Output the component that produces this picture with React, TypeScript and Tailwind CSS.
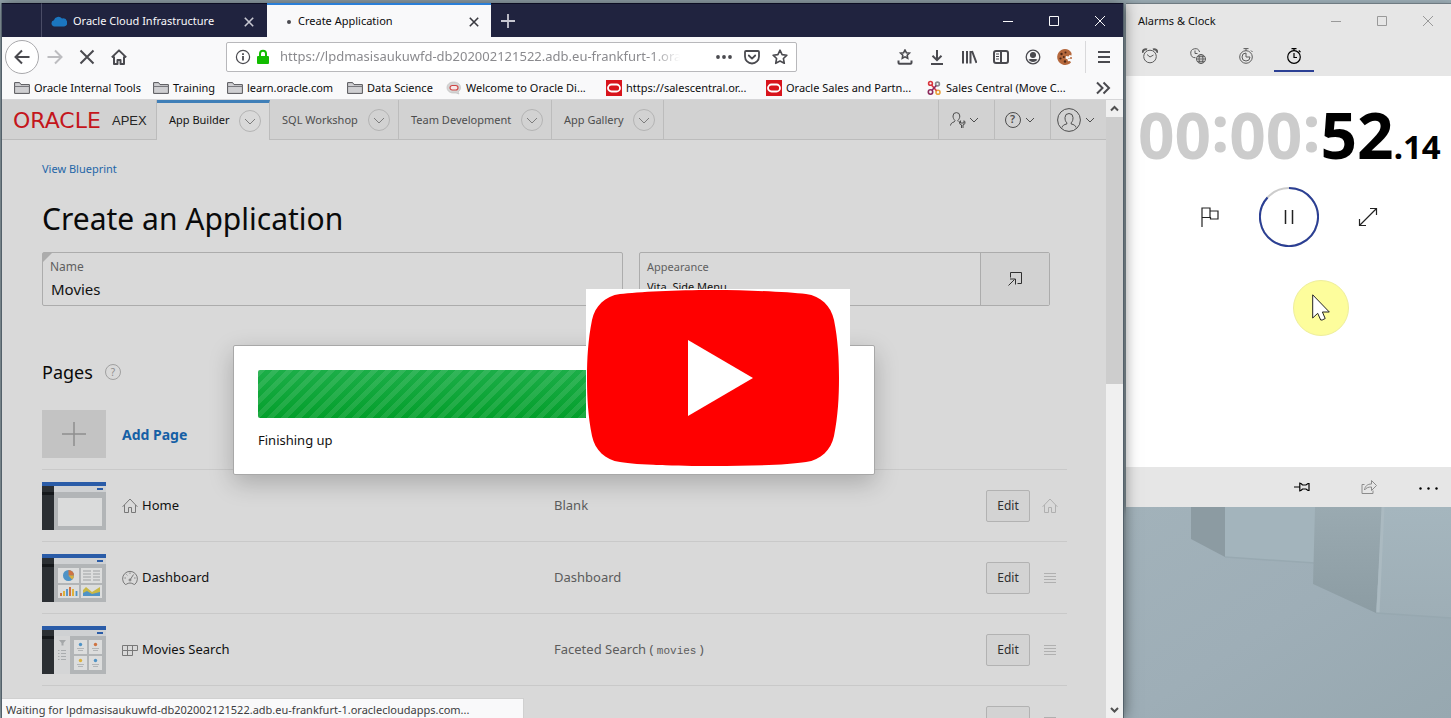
import React, { useState } from "react";

type IconProps = {
  size?: number;
  className?: string;
  sw?: number;
  children: React.ReactNode;
};

function Icon({ size = 16, className = "", sw = 1, children }: IconProps) {
  return (
    <svg
      aria-hidden="true"
      width={size}
      height={size}
      viewBox={`0 0 ${size} ${size}`}
      fill="none"
      stroke="currentColor"
      strokeWidth={sw}
      className={"shrink-0 " + className}
    >
      {children}
    </svg>
  );
}

function Chevron() {
  return (
    <Icon size={10}>
      <path d="M1 3l4 4 4-4" />
    </Icon>
  );
}

function Cross({ className = "" }: { className?: string }) {
  return (
    <Icon size={10} sw={1.6} className={className}>
      <path d="M.8.8l8.4 8.4M9.2.8L.8 9.2" />
    </Icon>
  );
}

/* ---------- Browser chrome ---------- */

function TabStrip() {
  return (
    <div className="flex h-[34px] shrink-0 bg-[#20233f] text-[11px] text-[#f9f9fa]">
      <div className="w-[39px] border-t border-[#0c0d22]" />
      <div className="flex w-[226px] items-center border-t border-l border-t-[#0c0d22] border-l-[#4a4c66] pt-0.5 pr-[13px] pl-[9px]">
        <svg aria-hidden="true" width="16" height="11" viewBox="0 0 16 11" className="mr-1.5 shrink-0 fill-[#1b76c0]">
          <path d="M3.500 10.500a3.200 3.200 0 0 1-.6-6.300A4.600 4.600 0 0 1 11 2.600 4 4 0 0 1 13.200 10.500z" />
        </svg>
        <span className="flex-1 whitespace-nowrap">Oracle Cloud Infrastructure</span>
        <button aria-label="Close Oracle Cloud Infrastructure tab" className="text-[#c8c8d2]">
          <Cross />
        </button>
      </div>
      <div className="flex w-[224px] items-center border-t-2 border-[#2a7fd8] bg-[#f9f9fa] pt-px pr-3 pl-5 text-[#0c0c0d]">
        <span className="mr-[7px] h-1 w-1 rounded-full bg-[#4a4a4f]" />
        <span className="flex-1 whitespace-nowrap">Create Application</span>
        <button aria-label="Close Create Application tab" className="text-[#3a3a40]">
          <Cross />
        </button>
      </div>
      <div className="flex flex-1 border-t border-[#0c0d22]">
        <button aria-label="New tab" className="flex w-[34px] items-center justify-center text-[#c8c8d2]">
          <Icon size={14} sw={1.8}>
            <path d="M7 0v14M0 7h14" />
          </Icon>
        </button>
        <div className="ml-auto flex">
          <button aria-label="Minimize" className="flex w-[46px] items-center justify-center">
            <Icon size={10}>
              <path d="M0 5.500h10" />
            </Icon>
          </button>
          <button aria-label="Maximize" className="flex w-[46px] items-center justify-center">
            <Icon size={10}>
              <path d="M.5.5h9v9h-9z" />
            </Icon>
          </button>
          <button aria-label="Close window" className="flex w-[46px] items-center justify-center">
            <Icon size={10}>
              <path d="M0 0l10 10M10 0L0 10" />
            </Icon>
          </button>
        </div>
      </div>
    </div>
  );
}

function ToolButton({ label, children, className = "" }: { label: string; children: React.ReactNode; className?: string }) {
  return (
    <button aria-label={label} className={"flex h-8 w-8 shrink-0 items-center justify-center " + className}>
      {children}
    </button>
  );
}

function Toolbar() {
  const [url, setUrl] = useState("https://lpdmasisaukuwfd-db202002121522.adb.eu-frankfurt-1.oraclecloudapps.com");
  return (
    <div className="flex h-10 shrink-0 items-center bg-[#f9f9fa] pl-[3px] text-[#4a4a4f]">
      <button
        aria-label="Back"
        className="flex h-[34px] w-[34px] shrink-0 items-center justify-center rounded-full border border-[#a9a9ac] bg-white"
      >
        <Icon sw={2}>
          <path d="M15.500 8H1.500M8 1.500L1.500 8 8 14.500" />
        </Icon>
      </button>
      <ToolButton label="Forward" className="text-[#bdbdc0]">
        <Icon sw={2}>
          <path d="M.5 8h14M8 1.500L14.500 8 8 14.500" />
        </Icon>
      </ToolButton>
      <ToolButton label="Stop">
        <Icon sw={2}>
          <path d="M1.500 1.500l13 13M14.500 1.500l-13 13" />
        </Icon>
      </ToolButton>
      <ToolButton label="Home">
        <Icon sw={2}>
          <path d="M.8 8.400L8 1.400l7.200 7M3 7.500V15h3.500v-4h3v4H13V7.500" strokeLinejoin="round" />
        </Icon>
      </ToolButton>
      <div className="grid flex-1 grid-cols-[91fr_571fr_92fr]">
        <div className="col-start-2 flex h-[30px] items-center rounded-xs border border-[#b8b8bb] bg-white px-2">
          <Icon sw={1.2}>
            <circle cx="8" cy="8" r="6.6" />
            <path d="M8 7v4.500M8 4.200v1.800" strokeWidth="1.8" />
          </Icon>
          <svg aria-hidden="true" width="14" height="16" viewBox="0 0 14 16" className="ml-[5px] shrink-0">
            <path d="M4 8V4.800a3 3 0 0 1 6 0V8" fill="none" stroke="#12bc00" strokeWidth="2" />
            <rect x="1" y="7" width="12" height="8" rx="1" fill="#12bc00" />
          </svg>
          <input
            aria-label="Address"
            value={url}
            onChange={(e) => setUrl(e.target.value)}
            className="ml-2.5 min-w-0 flex-1 bg-transparent text-[13px] text-[#8a8a8e] outline-none [mask-image:linear-gradient(to_right,#000_93%,transparent)]"
          />
          <button aria-label="Page actions" className="ml-9 flex w-4 justify-center">
            <Icon>
              <g fill="currentColor" stroke="none">
                <circle cx="2" cy="8" r="1.900" />
                <circle cx="8" cy="8" r="1.900" />
                <circle cx="14" cy="8" r="1.900" />
              </g>
            </Icon>
          </button>
          <button aria-label="Save to Pocket" className="ml-3">
            <Icon sw={1.8}>
              <path d="M2 2h12a1 1 0 0 1 1 1v4.500a7 7 0 0 1-14 0V3a1 1 0 0 1 1-1z" />
              <path d="M4.800 6.500L8 9.600l3.200-3.100" strokeLinecap="round" strokeLinejoin="round" />
            </Icon>
          </button>
          <button aria-label="Bookmark this page" className="-mr-2 ml-3 flex w-6">
            <Icon sw={1.6}>
              <path d="M8 1.200l2.100 4.400 4.800.6-3.500 3.300.9 4.800L8 12l-4.300 2.300.9-4.800L1.100 6.200l4.800-.6z" strokeLinejoin="round" />
            </Icon>
          </button>
        </div>
      </div>
      <ToolButton label="Show bookmarks">
        <Icon sw={1.6}>
          <path d="M8 1l1.400 2.700 3 .4-2.200 2.100.5 3L8 7.800 5.300 9.200l.5-3L3.600 4.100l3-.4z" />
          <path d="M1.500 11.500v2.200a1 1 0 0 0 1 1h11a1 1 0 0 0 1-1v-2.200" strokeWidth="2" />
        </Icon>
      </ToolButton>
      <ToolButton label="Downloads">
        <Icon sw={2}>
          <path d="M8 1v10M3.500 6.800L8 11.200l4.500-4.400M2 15h12" />
        </Icon>
      </ToolButton>
      <ToolButton label="Library">
        <Icon sw={2}>
          <path d="M2 2v12.500M6 2v12.500M9.500 2v12.500M11 2l4.500 12" />
        </Icon>
      </ToolButton>
      <ToolButton label="Sidebars">
        <Icon sw={2}>
          <rect x="1" y="2" width="14" height="12" rx="2" />
          <path d="M8 2v12" />
          <path d="M3 5h3M3 7.500h3M3 10h3" strokeWidth="1" />
        </Icon>
      </ToolButton>
      <ToolButton label="Account">
        <Icon sw={1.3}>
          <circle cx="8" cy="8" r="6.800" />
          <circle cx="8" cy="6" r="2.400" fill="currentColor" />
          <path d="M3.500 10.500c1.500-1 2-.5 2.500-.5h4c.5 0 1-.5 2.500.5C11.500 12 10 13 8 13s-3.500-1-4.500-2.500z" fill="currentColor" stroke="none" />
        </Icon>
      </ToolButton>
      <ToolButton label="Cookie manager">
        <svg aria-hidden="true" width="16" height="16" viewBox="0 0 16 16">
          <path d="M8 0a8 8 0 1 0 6 13.500l-1-1.500-2 .2-.5-2-2-.7.5-2.500 2.500.5 1-1.500 2 .5V4A8 8 0 0 0 8 0z" fill="#b5683c" />
          <g fill="#4d2716">
            <circle cx="4.500" cy="5" r="1.200" />
            <circle cx="8.500" cy="3.500" r="1" />
            <circle cx="3.500" cy="9.500" r="1.100" />
            <circle cx="6.800" cy="8" r="1" />
            <circle cx="8" cy="12.500" r="1.200" />
          </g>
          <circle cx="14" cy="9" r="1" fill="#b5683c" />
          <circle cx="12" cy="9.500" r=".6" fill="#b5683c" />
        </svg>
      </ToolButton>
      <div className="ml-1 flex h-8 w-[38px] shrink-0 items-center border-l border-[#d9d9db] pl-2.5">
        <button aria-label="Open menu">
          <Icon sw={2}>
            <path d="M2 3h12M2 8h12M2 13h12" />
          </Icon>
        </button>
      </div>
    </div>
  );
}

function Folder() {
  return (
    <Icon>
      <path d="M.6 13.400V2.600h5l1.400 2h8.400v8.800z" fill="#cfcfd2" stroke="#55555a" />
      <path d="M.6 6.500h14.800" stroke="#77777c" />
    </Icon>
  );
}

function OracleBadge() {
  return (
    <svg aria-hidden="true" width="16" height="16" viewBox="0 0 16 16" className="shrink-0">
      <rect width="16" height="16" fill="#d8141c" />
      <rect x="2" y="4.500" width="12" height="7" rx="3.500" fill="none" stroke="#fff" strokeWidth="1.800" />
    </svg>
  );
}

function ChatBadge() {
  return (
    <svg aria-hidden="true" width="16" height="16" viewBox="0 0 16 16" className="shrink-0">
      <path d="M7.500 2C3.500 2 1 4.500 1 7.500S3.500 13 7 13l3 0 3 1-1-2c1.500-1 2.500-2.500 2.500-4.500C14.500 4.500 12 2 7.500 2z" fill="#d5d5d5" stroke="#bbb" strokeWidth=".6" />
      <rect x="4" y="5.500" width="8" height="4.500" rx="2.200" fill="#f6e8e8" stroke="#cf4545" strokeWidth="1.200" />
    </svg>
  );
}

function KnotBadge() {
  return (
    <svg aria-hidden="true" width="16" height="16" viewBox="0 0 16 16" fill="none" strokeWidth="1.600" className="shrink-0">
      <circle cx="4.500" cy="3.400" r="1.900" stroke="#d9363e" />
      <circle cx="11.500" cy="4" r="1.900" stroke="#8a8a8e" />
      <circle cx="4.500" cy="12" r="2.200" stroke="#8c2a5c" />
      <circle cx="12" cy="12.300" r="2" stroke="#e9a13b" />
      <path d="M5.500 5l5 5.800" stroke="#d9363e" />
      <path d="M10.300 5.500L6 10.300" stroke="#8c2a5c" />
    </svg>
  );
}

const bookmarks = [
  { text: "Oracle Internal Tools", icon: <Folder />, width: "w-[139px]" },
  { text: "Training", icon: <Folder />, width: "w-[74px]" },
  { text: "learn.oracle.com", icon: <Folder />, width: "w-[120px]" },
  { text: "Data Science", icon: <Folder />, width: "w-[99px]" },
  { text: "Welcome to Oracle Di...", icon: <ChatBadge />, width: "w-[160px]" },
  { text: "https://salescentral.or...", icon: <OracleBadge />, width: "w-[160px]" },
  { text: "Oracle Sales and Partn...", icon: <OracleBadge />, width: "w-[160px]" },
  { text: "Sales Central (Move C...", icon: <KnotBadge />, width: "w-[160px]" },
];

function BookmarkBar() {
  return (
    <nav aria-label="Bookmarks" className="flex h-[23px] shrink-0 items-center overflow-hidden border-b border-[#d6d6d8] bg-[#f9f9fa] px-3 text-[11px] text-[#0c0c0d]">
      {bookmarks.map((b) => (
        <a key={b.text} href="#" className={"flex shrink-0 items-center gap-1 whitespace-nowrap " + b.width}>
          {b.icon}
          {b.text}
        </a>
      ))}
      <button aria-label="More bookmarks" className="ml-auto text-[#4a4a4f]">
        <Icon sw={2}>
          <path d="M2 2.500L7.500 8 2 13.500M8.500 2.500L14 8l-5.500 5.500" />
        </Icon>
      </button>
    </nav>
  );
}

/* ---------- APEX page ---------- */

const menus = [
  { text: "App Builder", width: "w-[113px]", active: true },
  { text: "SQL Workshop", width: "w-[129px]", active: false },
  { text: "Team Development", width: "w-[153px]", active: false },
  { text: "App Gallery", width: "w-[112px]", active: false },
];

function ApexHeader() {
  return (
    <header className="flex h-10 shrink-0 text-[11px] text-[#4d4d4d]">
      <a href="#" className="flex w-[155px] shrink-0 items-center border-r border-b border-[#bcbcbc] bg-[#d2d2d2] pt-0.5 pl-[11px]">
        <span className="w-[99px] font-['DejaVu_Sans'] text-[22px] leading-none text-[#c4161c]">ORACLE</span>
        <span className="font-['Liberation_Sans'] text-[13px] text-[#262626]">APEX</span>
      </a>
      {menus.map((m) => (
        <div
          key={m.text}
          className={
            "flex shrink-0 items-center justify-between border-r border-[#bcbcbc] pr-2 pl-3 " +
            m.width +
            (m.active ? " border-t-3 border-t-[#3f7fb8] bg-[#d9d9d9] pb-0.5 text-[#111111]" : " border-b bg-[#d2d2d2] pt-px")
          }
        >
          <a href="#" className="whitespace-nowrap">{m.text}</a>
          <button
            aria-label={m.text + " menu"}
            className="flex h-[22px] w-[22px] items-center justify-center rounded-full border border-[#b4b4b4] text-[#7d7d7d]"
          >
            <Icon size={14}>
              <path d="M2 5l5 5 5-5" />
            </Icon>
          </button>
        </div>
      ))}
      <div className="flex flex-1 justify-end border-b border-[#bcbcbc] bg-[#d2d2d2]">
        <button aria-label="Administration" className="flex w-14 items-center justify-center gap-0.5 border-l border-[#bcbcbc] pr-1.5">
          <Icon size={18}>
            <path d="M1.500 14.500c.3-2 1.500-3 3.700-3.600l.8-1.300C4.800 8.300 4 6.800 4 5a3.300 3.300 0 0 1 6.800 0c0 1.800-.8 3.300-2 4.600l.5 1" />
            <path d="M11.500 9.700a2.300 2.300 0 0 0 1 4.200V17M15 9.700a2.300 2.300 0 0 1-1 4.200V17M11.500 9.700V12H15V9.700" />
          </Icon>
          <Chevron />
        </button>
        <button aria-label="Help" className="flex w-14 items-center justify-center gap-1 border-l border-[#bcbcbc] pr-1.5">
          <span className="flex h-4 w-4 items-center justify-center rounded-full border border-current text-[11px] font-semibold">?</span>
          <Chevron />
        </button>
        <button aria-label="User account" className="flex w-14 items-center justify-center gap-1 border-l border-[#bcbcbc] pr-1.5">
          <Icon size={24}>
            <circle cx="12" cy="12" r="11.400" />
            <path d="M5 19.500c.5-2 2-3 4.800-3.500v-1.200C8.500 13.500 8 12 8 9.500a4 4 0 0 1 8 0c0 2.500-.5 4-1.800 5.300V16c2.800.5 4.300 1.500 4.800 3.500" />
          </Icon>
          <Chevron />
        </button>
      </div>
    </header>
  );
}

function ThumbFrame({ children }: { children: React.ReactNode }) {
  return (
    <svg aria-hidden="true" width="64" height="48" viewBox="0 0 64 48" className="block">
      <rect width="64" height="48" fill="#c7c9ca" />
      <rect x="12" y="10" width="52" height="38" fill="#b2b5b7" />
      <rect y="4" width="12" height="44" fill="#2b2f33" />
      <rect y="10" width="12" height="3" fill="#15181b" />
      <rect x="12" y="4" width="52" height="6" fill="#cfd1d3" />
      <rect width="64" height="4" fill="#2a5ca8" />
      <rect x="55" y="6" width="6" height="2" fill="#2a5ca8" />
      {children}
    </svg>
  );
}

function BlankThumb() {
  return (
    <ThumbFrame>
      <rect x="16" y="16" width="44" height="28" fill="#dadbdb" />
    </ThumbFrame>
  );
}

function DashboardThumb() {
  return (
    <ThumbFrame>
      <g fill="#dcdddd">
        <rect x="16" y="14" width="21" height="15" />
        <rect x="39" y="14" width="21" height="15" />
        <rect x="16" y="31" width="21" height="13" />
        <rect x="39" y="31" width="21" height="13" />
      </g>
      <circle cx="26.500" cy="21.500" r="5.500" fill="#4f93c6" />
      <path d="M26.500 21.500V16a5.500 5.500 0 0 1 5.500 5.500z" fill="#cf7442" />
      <path d="M26.500 21.500H32a5.500 5.500 0 0 1-2 4z" fill="#dcb13c" />
      <path d="M41 17h8M51 17h7M41 20h8M51 20h7M41 23h8M51 23h7M41 26h8M51 26h7" stroke="#b2b5b7" strokeWidth="1.500" />
      <path d="M19 42v-3M28 42v-9M31 42v-5" stroke="#cf7442" strokeWidth="2" />
      <path d="M22 42v-5M31 42v-7" stroke="#dcb13c" strokeWidth="2" />
      <path d="M25 42v-7M34.500 42v-5" stroke="#4f93c6" strokeWidth="1.800" />
      <path d="M41 42v-6l3-3 6 5 8-5v9z" fill="#c9b845" />
      <path d="M41 42v-3l4-2 5 3 8-2v4z" fill="#4f93c6" />
    </ThumbFrame>
  );
}

function SearchThumb() {
  return (
    <ThumbFrame>
      <rect x="12" y="10" width="16" height="38" fill="#d4d5d6" />
      <path d="M17 14h7l-2.500 3v2.500h-2V17z" fill="#a4a7a9" />
      <path d="M16 24.500h1.500M19 24.500h5M16 27.500h1.500M19 27.500h5M16 30.500h1.500M19 30.500h5M16 33.500h1.500M19 33.500h5" stroke="#a9acae" />
      <g fill="#dcdddd">
        <rect x="32" y="14" width="13" height="14" />
        <rect x="47" y="14" width="13" height="14" />
        <rect x="32" y="30" width="13" height="14" />
        <rect x="47" y="30" width="13" height="14" />
      </g>
      <circle cx="38.500" cy="18.500" r="1.700" fill="#4f93c6" />
      <circle cx="53.500" cy="18.500" r="1.700" fill="#cf7442" />
      <circle cx="38.500" cy="34.500" r="1.700" fill="#dcb13c" />
      <circle cx="53.500" cy="34.500" r="1.700" fill="#4f93c6" />
      <path d="M35 22.500h7M36 24.500h5M50 22.500h7M51 24.500h5M35 38.500h7M36 40.500h5M50 38.500h7M51 40.500h5" stroke="#b2b5b7" />
    </ThumbFrame>
  );
}

function HomeGlyph() {
  return (
    <Icon>
      <path d="M.6 8.800L8 1l7.400 7.800M2.500 7v7.500h4v-5h3v5h4V7" />
    </Icon>
  );
}

function GaugeGlyph() {
  return (
    <Icon>
      <path d="M3.200 14.400a7.400 7.400 0 1 1 9.600 0c-.8.700-2-1.400-4.800-1.400s-4 2.100-4.800 1.400z" />
      <path d="M8 10l3.500-5.500M2.500 8h1.300M4.500 4.500l.8.800M8 2.500v1.300M12.200 8h1.300" />
      <circle cx="8" cy="10" r="1" />
    </Icon>
  );
}

function GridGlyph() {
  return (
    <Icon>
      <path d="M.5 3.500h15v5H.5zM.5 8.500v5h10v-10M5.500 3.500v10" />
    </Icon>
  );
}

function DragHandle() {
  return (
    <Icon size={14}>
      <path d="M1 2.500h12M1 5.500h12M1 8.500h12M1 11.500h12" />
    </Icon>
  );
}

const pages = [
  { name: "Home", type: "Blank", code: "", thumb: <BlankThumb />, glyph: <HomeGlyph />, handle: <HomeGlyph /> },
  { name: "Dashboard", type: "Dashboard", code: "", thumb: <DashboardThumb />, glyph: <GaugeGlyph />, handle: <DragHandle /> },
  { name: "Movies Search", type: "Faceted Search", code: "movies", thumb: <SearchThumb />, glyph: <GridGlyph />, handle: <DragHandle /> },
];

function PageTable() {
  return (
    <table className="w-full table-fixed text-[13px]">
      <colgroup>
        <col className="w-20" />
        <col className="w-[432px]" />
        <col />
        <col className="w-[46px]" />
        <col className="w-[35px]" />
      </colgroup>
      <tbody>
        {pages.map((p) => (
          <tr key={p.name} className="h-[72px] border-t border-[#c9c9c9]">
            <td>{p.thumb}</td>
            <td>
              <span className="flex items-center gap-1 text-[#787878]">
                {p.glyph}
                <span className="text-[#111111]">{p.name}</span>
              </span>
            </td>
            <td className="text-[#5c5c5c]">
              {p.type}
              {p.code && (
                <span>
                  {" ("} <code className="font-['Liberation_Mono'] text-[11px]">{p.code}</code> )
                </span>
              )}
            </td>
            <td>
              <button className="h-8 w-11 rounded-xs border border-[#b2b2b2] bg-[#d3d3d3] text-[12px] text-[#303030]">Edit</button>
            </td>
            <td className="text-[#b0b0b0]">
              <span className="flex justify-center">{p.handle}</span>
            </td>
          </tr>
        ))}
        <tr className="h-[72px] border-t border-[#c9c9c9]">
          <td colSpan={3} />
          <td>
            <button aria-label="Edit next page" className="block h-8 w-11 rounded-xs border border-[#b2b2b2] bg-[#d3d3d3]" />
          </td>
          <td className="text-[#b0b0b0]">
            <span className="flex justify-center">
              <DragHandle />
            </span>
          </td>
        </tr>
      </tbody>
    </table>
  );
}

function ApexForm() {
  const [name, setName] = useState("Movies");
  return (
    <div className="mt-3 mr-[17px] grid grid-cols-[581fr_411fr] gap-4">
      <div className="relative h-[54px] rounded-xs border border-[#acacac] px-[7px] pt-1.5">
        <svg aria-hidden="true" width="9" height="9" viewBox="0 0 9 9" className="absolute top-0 left-0 fill-[#acacac]">
          <path d="M0 0h9L0 9z" />
        </svg>
        <label htmlFor="app-name" className="block text-[12px] leading-4 text-[#5f5f5f]">Name</label>
        <input
          id="app-name"
          value={name}
          onChange={(e) => setName(e.target.value)}
          className="mt-1 block w-full bg-transparent pl-px text-[15px] leading-5 text-[#111111] outline-none"
        />
      </div>
      <div className="flex h-[54px] rounded-xs border border-[#acacac]">
        <div className="min-w-0 flex-1 px-[7px] pt-1.5">
          <label htmlFor="app-look" className="block text-[11px] leading-4 text-[#5f5f5f]">Appearance</label>
          <input
            id="app-look"
            readOnly
            value="Vita, Side Menu"
            className="mt-0.5 block w-full bg-transparent text-[11px] leading-5 text-[#111111] outline-none"
          />
        </div>
        <button aria-label="Choose appearance" className="flex w-[69px] items-center justify-center border-l border-[#acacac] bg-[#d2d2d2] text-[#303030]">
          <Icon>
            <path d="M3.500 6.500v-5h11v11h-4M1.500 14.500l6-6M3 8h5.500v5.500" />
          </Icon>
        </button>
      </div>
    </div>
  );
}

function ProgressDialog() {
  return (
    <div
      role="dialog"
      aria-label="Creating application"
      className="absolute top-[245px] left-1/2 w-[642px] -translate-x-1/2 rounded-xs border border-[#a8a8a8] bg-white p-6 shadow-[0_8px_24px_rgba(0,0,0,0.22)]"
    >
      <div
        role="progressbar"
        aria-valuenow={95}
        aria-label="Finishing up"
        className="h-12 w-[560px] rounded-xs bg-[repeating-linear-gradient(135deg,rgba(255,255,255,0.1)_0_5px,transparent_5px_10px),linear-gradient(#1cae48,#039f2b)]"
      />
      <p className="mt-3 text-[13px] leading-5 text-[#111111]">Finishing up</p>
    </div>
  );
}

function PlayOverlay() {
  return (
    <button aria-label="Play video" className="absolute top-[189px] left-1/2 ml-8 block h-[178px] w-[264px] bg-white">
      <svg aria-hidden="true" width="264" height="178" viewBox="0 0 264 178">
        <path
          d="M127 1C90 1 52 3 34 5 19 7 9 17 6 31 2 51 1 70 1 89s1 38 5 58c3 14 13 24 28 26 18 3 56 4 93 4s75-1 93-4c15-2 25-12 28-26 4-20 5-39 5-58s-1-38-5-58C245 17 235 7 220 5 202 3 164 1 127 1z"
          fill="#ff0000"
        />
        <path d="M102 51l65 38-65 38z" fill="#fff" />
      </svg>
    </button>
  );
}

function ApexPage() {
  return (
    <div className="relative min-w-0 flex-1 overflow-hidden bg-[#d9d9d9]">
      <ApexHeader />
      <main className="pr-[39px] pl-10">
        <a href="#" className="mt-5 block w-fit text-[11px] leading-[18px] text-[#1f66a8]">View Blueprint</a>
        <h1 className="mt-5 text-[30px] leading-[42px] text-[#0a0a0a]">Create an Application</h1>
        <ApexForm />
        <div className="mt-[54px] flex h-6 items-center gap-3">
          <h2 className="text-[18px] leading-6 text-[#0a0a0a]">Pages</h2>
          <button aria-label="Help on pages" className="flex h-4 w-4 items-center justify-center rounded-full border border-[#a0a0a0] text-[10px] text-[#8c8c8c]">
            ?
          </button>
        </div>
        <button className="mt-[26px] mb-[11px] flex items-center gap-4 text-[14px] font-bold text-[#155fa5]">
          <span className="flex h-12 w-16 items-center justify-center bg-[#c3c3c3] text-[#8f8f8f]">
            <Icon size={24}>
              <path d="M12 0v24M0 12h24" strokeWidth="1.500" />
            </Icon>
          </span>
          Add Page
        </button>
        <PageTable />
      </main>
      <ProgressDialog />
      <PlayOverlay />
      <div className="absolute bottom-0 left-0 h-5 w-[522px] border-t border-r border-[#d0d0d0] bg-[#f9f9fa] pl-1 text-[11px] leading-[22px] whitespace-nowrap text-[#3d3d40]">
        Waiting for lpdmasisaukuwfd-db202002121522.adb.eu-frankfurt-1.oraclecloudapps.com...
      </div>
    </div>
  );
}

function Scrollbar() {
  return (
    <div className="flex w-[17px] shrink-0 flex-col bg-[#f0f0f0] text-[#505050]">
      <button aria-label="Scroll up" className="flex h-[17px] items-center justify-center">
        <Icon size={9} sw={2}>
          <path d="M1 6.500L4.500 3 8 6.500" />
        </Icon>
      </button>
      <div className="h-[267px] bg-[#cdcdcd]" />
      <button aria-label="Scroll down" className="mt-auto flex h-[17px] items-center justify-center">
        <Icon size={9} sw={2}>
          <path d="M1 3l3.500 3.500L8 3" />
        </Icon>
      </button>
    </div>
  );
}

/* ---------- Alarms & Clock window ---------- */

function AlarmGlyph() {
  return (
    <Icon>
      <circle cx="8" cy="8.500" r="6.300" />
      <path d="M5 6.500L8 9l3.500-2" />
      <path d="M.8 4.800A3 3 0 0 1 5 1.500M11 1.500a3 3 0 0 1 4.200 3.300" strokeWidth="2" />
    </Icon>
  );
}

function WorldGlyph() {
  return (
    <Icon>
      <path d="M5.500 9.700A4.500 4.500 0 1 1 9.600 4M5 2.500V5.500h2.500" />
      <circle cx="11" cy="11" r="4.500" />
      <ellipse cx="11" cy="11" rx="2" ry="4.500" />
      <path d="M6.500 11h9M7.300 8.700h7.400M7.300 13.300h7.400" />
    </Icon>
  );
}

function TimerGlyph() {
  return (
    <Icon>
      <circle cx="8" cy="9" r="6.300" />
      <path d="M8 5v4h4a4 4 0 1 1-4-4zM5.500 .600h5M8 .600v2M13 2.500l1.500 1.500" />
    </Icon>
  );
}

function StopwatchGlyph() {
  return (
    <Icon sw={1.2}>
      <circle cx="8" cy="9" r="6.300" />
      <path d="M8 5v4.500h3M5.500 .700h5M8 .700v2M12.800 2.500l1.700 1.700" />
    </Icon>
  );
}

const clockTabs = [
  { label: "Alarm", glyph: <AlarmGlyph />, active: false },
  { label: "World clock", glyph: <WorldGlyph />, active: false },
  { label: "Timer", glyph: <TimerGlyph />, active: false },
  { label: "Stopwatch", glyph: <StopwatchGlyph />, active: true },
];

function ClockWindow() {
  return (
    <section aria-label="Alarms & Clock" className="flex h-[504px] shrink-0 flex-col border-t border-[#6f7b82] bg-white shadow-[0_3px_8px_rgba(0,0,0,0.35)]">
      <div className="bg-[#e6e6e6]">
        <div className="flex h-[34px] items-center text-[11px]">
          <span className="flex-1 pl-3 text-[#111111]">Alarms &amp; Clock</span>
          <button aria-label="Minimize clock" className="flex w-[46px] justify-center text-[#999999]">
            <Icon size={10}>
              <path d="M0 5.500h10" />
            </Icon>
          </button>
          <button aria-label="Maximize clock" className="flex w-[46px] justify-center text-[#999999]">
            <Icon size={10}>
              <path d="M.5.5h9v9h-9z" />
            </Icon>
          </button>
          <button aria-label="Close clock" className="flex w-[46px] justify-center text-[#999999]">
            <Icon size={10}>
              <path d="M0 0l10 10M10 0L0 10" />
            </Icon>
          </button>
        </div>
        <div className="flex h-[38px] items-start">
          {clockTabs.map((t) => (
            <button
              key={t.label}
              aria-label={t.label}
              className={"flex h-[34px] w-12 flex-col items-center justify-between pt-2.5 " + (t.active ? "text-black" : "text-[#5c5c5c]")}
            >
              {t.glyph}
              <span className={t.active ? "h-0.5 w-10 bg-[#2b3f94]" : "h-0.5 w-10"} />
            </button>
          ))}
        </div>
      </div>
      <div className="mt-5 pl-3 text-[64px] leading-[64px] font-bold whitespace-nowrap text-black">
        <span className="text-[#cccccc]">
          00<span className="align-[7px] leading-none">:</span>00<span className="align-[7px] leading-none">:</span>
        </span>
        52<span className="text-[33px] leading-none">.14</span>
      </div>
      <div className="mt-5 flex items-center justify-between pr-[73px] pl-[74px] text-[#222222]">
        <button aria-label="Lap">
          <Icon size={20}>
            <path d="M2 20V1h8v9.500H2M10 4h8v8h-7.500V10" strokeWidth="1.200" />
          </Icon>
        </button>
        <button aria-label="Pause" className="block">
          <Icon size={60}>
            <circle cx="30" cy="30" r="29" stroke="#cccccc" strokeWidth="2" />
            <path d="M30 1A29 29 0 1 1 8.500 10.500" stroke="#2b3f94" strokeWidth="2" />
            <path d="M26.500 23v14M33.500 23v14" strokeWidth="1.500" />
          </Icon>
        </button>
        <button aria-label="Expand">
          <Icon size={20} sw={1.2}>
            <path d="M1.500 18.500l17-17M12 1.500h6.500V8M1.500 12v6.500H8" />
          </Icon>
        </button>
      </div>
      <div className="mt-[33px] flex h-14 pl-[167px]">
        <div className="flex h-14 w-14 items-center justify-center rounded-full border border-[#eeee9c] bg-[#fdfd9c]">
          <svg aria-hidden="true" width="18" height="28" viewBox="0 0 18 28">
            <path d="M.7.8v23.200l5-4.700 3 6.700h1.500l3-1.500-2.800-6.500h6.900z" fill="#fff" stroke="#222" strokeLinejoin="round" />
          </svg>
        </div>
      </div>
      <div className="mt-auto flex h-10 items-center justify-end bg-[#e6e6e6] pr-[13px] text-black">
        <button aria-label="Pin to Start">
          <Icon sw={1.2}>
            <path d="M0 8h5.500M5.800 3.500v9M5.800 4.500h1.200l1.500 1.500h3.500l2-1.500h1v7h-1l-2-1.500H8.500L7 11.500H5.800" />
          </Icon>
        </button>
        <button aria-label="Share" className="ml-[51px] text-[#8c8c8c]">
          <Icon>
            <path d="M3.500 5.500h-2.500v9h11v-3M3.500 11c.5-4 3-6 7-6V1.500l5 5-5 5V8c-3 0-5 .5-7 3z" />
          </Icon>
        </button>
        <button aria-label="More options" className="ml-[41px]">
          <Icon size={20}>
            <g fill="currentColor" stroke="none">
              <circle cx="2.500" cy="11.500" r="1.200" />
              <circle cx="10.500" cy="11.500" r="1.200" />
              <circle cx="18.500" cy="11.500" r="1.200" />
            </g>
          </Icon>
        </button>
      </div>
    </section>
  );
}

function Wallpaper() {
  return (
    <svg aria-hidden="true" viewBox="0 0 325 211" preserveAspectRatio="xMinYMin slice" className="min-h-0 w-full flex-1">
      <defs>
        <linearGradient id="sky" x1="0" y1="0" x2="1" y2="1">
          <stop offset="0" stopColor="#a2b2ba" />
          <stop offset=".5" stopColor="#9eaeb7" />
          <stop offset="1" stopColor="#97a8b0" />
        </linearGradient>
        <linearGradient id="face" x1="0" y1="0" x2="0" y2="1">
          <stop offset="0" stopColor="#9aaab1" />
          <stop offset="1" stopColor="#8c9ca3" />
        </linearGradient>
        <linearGradient id="front" x1="0" y1="0" x2="0" y2="1">
          <stop offset="0" stopColor="#a5b6be" />
          <stop offset="1" stopColor="#9eaeb6" />
        </linearGradient>
      </defs>
      <rect width="325" height="211" fill="url(#sky)" />
      <path d="M65 0v32l34 18V0z" fill="#8c9ba2" />
      <path d="M99 0h90v56l-90-6z" fill="#a3b4bc" />
      <path d="M99 50l90 6" stroke="#98a9b1" strokeWidth="1.500" />
      <path d="M189 0l-2 77 63 29 7-106z" fill="url(#face)" />
      <path d="M257 0h68v111l-75-5z" fill="url(#front)" />
      <path d="M257 0l-5 106" stroke="#abbac1" strokeWidth="3" />
      <path d="M250 106l75 5" stroke="#97a8b0" strokeWidth="1.500" />
    </svg>
  );
}

export default function App() {
  return (
    <div className="flex h-screen overflow-hidden bg-[#9aabb3] pt-[3px] pl-px font-['Noto_Sans','Open_Sans',sans-serif]">
      <div className="z-10 flex min-w-0 flex-1 flex-col border-r border-l border-[#53606a] shadow-[0_0_14px_rgba(0,0,0,0.5)]">
        <TabStrip />
        <Toolbar />
        <BookmarkBar />
        <div className="flex min-h-0 flex-1">
          <ApexPage />
          <Scrollbar />
        </div>
      </div>
      <div className="ml-0.5 flex w-[325px] shrink-0 flex-col">
        <ClockWindow />
        <Wallpaper />
      </div>
    </div>
  );
}
